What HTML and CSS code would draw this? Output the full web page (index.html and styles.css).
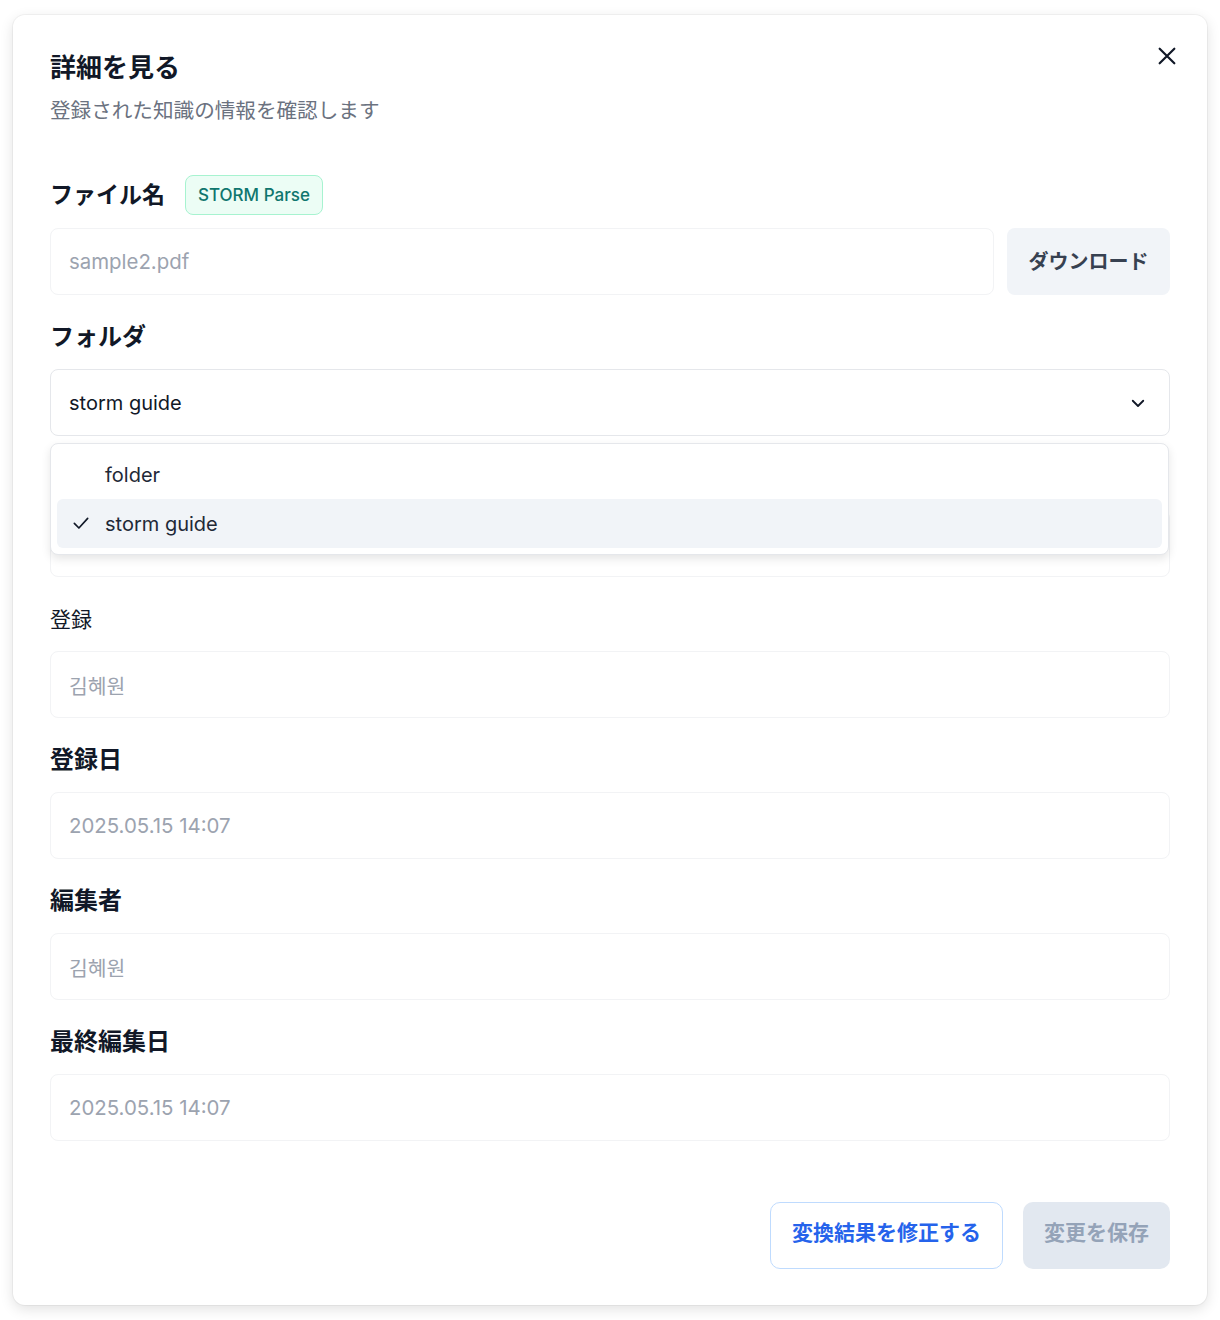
FILE: index.html
```html
<!DOCTYPE html>
<html lang="ja">
<head>
    <meta charset="UTF-8">
    <meta name="viewport" content="width=device-width, initial-scale=1.0">
    <title>詳細を見る</title>
    <link rel="stylesheet" href="styles.css">
</head>
<body>

    <div class="modal">
        <button class="close-btn" aria-label="close">
            <svg width="22" height="22" viewBox="0 0 24 24" fill="none" stroke="#111827" stroke-width="2.4" stroke-linecap="round">
                <path d="M4 4 L20 20 M20 4 L4 20"/>
            </svg>
        </button>

        <h2 class="modal-title">詳細を見る</h2>
        <p class="modal-sub">登録された知識の情報を確認します</p>

        <!-- File name -->
        <div class="field first">
            <div class="field-head">
                <span class="label">ファイル名</span>
                <span class="badge">STORM Parse</span>
            </div>
            <div class="file-row">
                <div class="input">sample2.pdf</div>
                <button class="btn-download">ダウンロード</button>
            </div>
        </div>

        <!-- Folder select with open menu -->
        <div class="field">
            <div class="field-head"><span class="label">フォルダ</span></div>
            <div class="select-wrap">
                <div class="select">
                    <span>storm guide</span>
                    <svg width="18" height="18" viewBox="0 0 24 24" fill="none" stroke="#111827" stroke-width="2.4" stroke-linecap="round" stroke-linejoin="round">
                        <path d="M5 9 L12 16 L19 9"/>
                    </svg>
                </div>
                <ul class="menu">
                    <li class="menu-item">folder</li>
                    <li class="menu-item selected">
                        <svg class="check" width="20" height="20" viewBox="0 0 24 24" fill="none" stroke="#111827" stroke-width="2" stroke-linecap="round" stroke-linejoin="round">
                            <path d="M4 12.5 L9.5 18 L20 6.5"/>
                        </svg>
                        storm guide
                    </li>
                </ul>
            </div>
        </div>

        <!-- Hidden under the menu -->
        <div class="field">
            <div class="field-head"><span class="label">タグ</span></div>
            <div class="input"></div>
        </div>

        <div class="field">
            <div class="field-head"><span class="label light">登録</span></div>
            <div class="input kr">김혜원</div>
        </div>

        <div class="field">
            <div class="field-head"><span class="label">登録日</span></div>
            <div class="input">2025.05.15 14:07</div>
        </div>

        <div class="field">
            <div class="field-head"><span class="label">編集者</span></div>
            <div class="input kr">김혜원</div>
        </div>

        <div class="field last">
            <div class="field-head"><span class="label">最終編集日</span></div>
            <div class="input">2025.05.15 14:07</div>
        </div>

        <div class="actions">
            <button class="btn-outline">変換結果を修正する</button>
            <button class="btn-disabled" disabled>変更を保存</button>
        </div>
    </div>

</body>
</html>
```

FILE: styles.css
```css
body {
    margin: 0;
    background-color: #ffffff;
    font-family: Inter, "Noto Sans CJK JP", sans-serif;
    color: #111827;
}

button {
    font-family: inherit;
    cursor: pointer;
}

/* Modal */
.modal {
    position: relative;
    margin: 15px 13px;
    height: 1290px;
    box-sizing: border-box;
    padding: 37px 37px;
    background: #fff;
    border-radius: 12px;
    box-shadow: 0 0 0 1px rgba(0, 0, 0, 0.04), 0 4px 14px rgba(0, 0, 0, 0.12);
}

.close-btn {
    position: absolute;
    top: 29px;
    right: 28px;
    width: 24px;
    height: 24px;
    padding: 0;
    border: none;
    background: none;
    display: flex;
    align-items: center;
    justify-content: center;
}

.modal-title {
    margin: 0;
    font-size: 26px;
    line-height: 32px;
    font-weight: 700;
    color: #111827;
}

.modal-sub {
    margin: 13px 0 0;
    font-size: 20.6px;
    line-height: 28px;
    color: #6b7280;
}

/* Fields */
.field {
    margin-top: 26px;
}

.field.first {
    margin-top: 50px;
}

.field-head {
    display: flex;
    align-items: center;
    gap: 20px;
    height: 32px;
    margin-bottom: 16px;
}

.field.first .field-head {
    height: 40px;
    margin-bottom: 13px;
}

.label {
    font-size: 24px;
    line-height: 28px;
    font-weight: 700;
    color: #111827;
}

.field.first .label {
    font-size: 23px;
}

.label.light {
    font-size: 21px;
    padding-top: 1px;
    font-weight: 400;
}

.badge {
    display: inline-flex;
    align-items: center;
    height: 38px;
    padding: 0 12px;
    border: 1px solid #a7f3d0;
    border-radius: 8px;
    background: #ecfdf5;
    color: #0f766e;
    font-size: 17px;
    font-weight: 500;
}

.input {
    height: 67px;
    box-sizing: border-box;
    padding: 0 18px;
    display: flex;
    align-items: center;
    border: 1px solid #f2f3f5;
    border-radius: 8px;
    color: #9ca3af;
    font-size: 20.4px;
}

.input.kr {
    font-family: Inter, "Noto Sans CJK KR", sans-serif;
}

.file-row {
    display: flex;
    gap: 13px;
}

.file-row .input {
    flex: 1;
}

.btn-download {
    width: 163px;
    height: 67px;
    padding-bottom: 3px;
    border: none;
    border-radius: 8px;
    background: #f1f4f8;
    color: #374151;
    font-size: 20px;
    font-weight: 700;
}

/* Select + menu */
.select-wrap {
    position: relative;
}

.select {
    height: 67px;
    box-sizing: border-box;
    padding: 0 22px 0 18px;
    display: flex;
    align-items: center;
    justify-content: space-between;
    border: 1px solid #e5e7eb;
    border-radius: 8px;
    font-size: 20px;
    color: #111827;
}

.menu {
    position: absolute;
    top: 74px;
    left: 0;
    right: 1px;
    margin: 0;
    padding: 6px;
    list-style: none;
    background: #fff;
    border: 1px solid #e5e7eb;
    border-radius: 8px;
    box-shadow: 0 4px 10px rgba(0, 0, 0, 0.10);
    z-index: 2;
}

.menu-item {
    position: relative;
    height: 49px;
    display: flex;
    align-items: center;
    padding-left: 48px;
    border-radius: 6px;
    font-size: 20px;
    color: #1f2937;
}

.menu-item.selected {
    background: #f1f4f8;
}

.check {
    position: absolute;
    left: 14px;
    top: 14px;
}

/* Footer buttons */
.actions {
    display: flex;
    justify-content: flex-end;
    gap: 20px;
    margin-top: 61px;
}

.btn-outline {
    height: 67px;
    padding: 0 21px 10px;
    background: #fff;
    border: 1px solid #bfdbfe;
    border-radius: 10px;
    color: #2563eb;
    font-size: 21px;
    font-weight: 700;
}

.btn-disabled {
    height: 67px;
    padding: 0 21px 10px;
    background: #e2e8f0;
    border: none;
    border-radius: 10px;
    color: #94a3b8;
    font-size: 21px;
    font-weight: 700;
    cursor: default;
}
```
